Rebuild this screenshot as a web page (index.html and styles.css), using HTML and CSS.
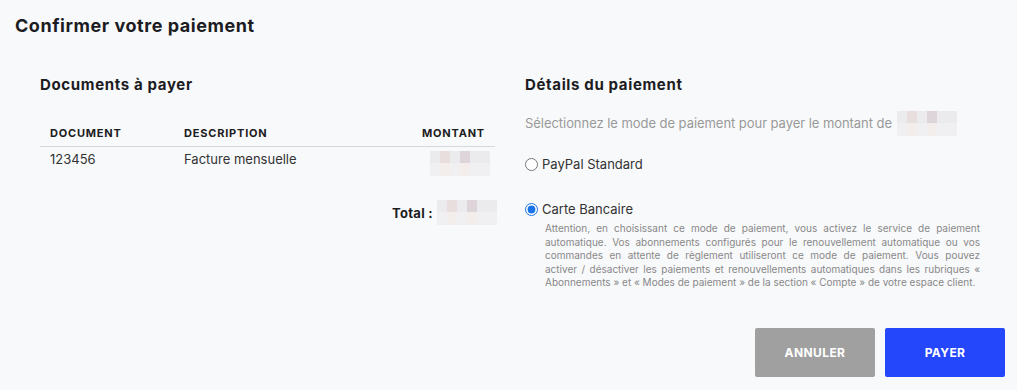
FILE: index.html
```html
<!DOCTYPE html>
<html lang="fr">
<head>
<meta charset="utf-8">
<title>Confirmer votre paiement</title>
<link rel="stylesheet" href="styles.css">
</head>
<body>
<div class="page">
  <h1 class="title">Confirmer votre paiement</h1>
  <div class="columns">
    <section class="col-left">
      <h2 class="section-title">Documents à payer</h2>
      <table class="docs">
        <thead>
          <tr><th class="c-doc">Document</th><th class="c-desc">Description</th><th class="c-amt">Montant</th></tr>
        </thead>
        <tbody>
          <tr><td class="c-doc">123456</td><td class="c-desc">Facture mensuelle</td><td class="c-amt"><span class="blur"><i></i><i class="p"></i><i></i><i class="d"></i><i></i><i></i><i></i><i class="lp"></i><i></i><i class="lp"></i><i></i><i></i></span></td></tr>
        </tbody>
      </table>
      <div class="total">
        <span class="total-label">Total :</span>
        <span class="blur"><i></i><i class="p"></i><i></i><i class="d"></i><i></i><i></i><i></i><i class="lp"></i><i></i><i class="lp"></i><i></i><i></i></span>
      </div>
    </section>
    <section class="col-right">
      <h2 class="section-title">Détails du paiement</h2>
      <p class="intro">Sélectionnez le mode de paiement pour payer le montant de <span class="blur"><i></i><i class="p"></i><i></i><i class="d"></i><i></i><i></i><i></i><i class="lp"></i><i></i><i class="lp"></i><i></i><i></i></span></p>
      <label class="option opt-paypal"><input type="radio" name="mode"> <span>PayPal Standard</span></label>
      <label class="option opt-card"><input type="radio" name="mode" checked> <span>Carte Bancaire</span></label>
      <p class="notice">Attention, en choisissant ce mode de paiement, vous activez le service de paiement automatique. Vos abonnements configurés pour le renouvellement automatique ou vos commandes en attente de règlement utiliseront ce mode de paiement. Vous pouvez <span class="nowrap">activer /</span> désactiver les paiements et renouvellements automatiques dans les rubriques « Abonnements » et « Modes de paiement » de la section « Compte » de votre espace client.</p>
    </section>
  </div>
  <div class="actions">
    <button class="btn btn-cancel">Annuler</button>
    <button class="btn btn-pay">Payer</button>
  </div>
</div>
</body>
</html>
```

FILE: styles.css
```css
* { box-sizing: border-box; }
html, body { margin: 0; padding: 0; }
body {
  background: #f8f9fb;
  font-family: Inter, "Liberation Sans", Arial, sans-serif;
  color: #222;
  width: 1017px;
  height: 390px;
  overflow: hidden;
}
.page { padding: 15px 12px 0 15px; }
.title {
  margin: 0;
  font-size: 18px;
  font-weight: 700;
  line-height: 22px;
  color: #1c1c22;
  letter-spacing: 0.55px;
}
.columns {
  display: grid;
  grid-template-columns: 457px 458px;
  column-gap: 28px;
  padding-left: 25px;
  margin-top: 38px;
}
.section-title {
  margin: 0;
  font-size: 15px;
  font-weight: 700;
  line-height: 20px;
  color: #1c1c22;
  letter-spacing: 0.65px;
}
.docs {
  margin-top: 26px;
  width: 455px;
  border-collapse: collapse;
}
.docs th {
  font-size: 11px;
  font-weight: 700;
  text-transform: uppercase;
  text-align: left;
  color: #1c1c22;
  padding: 5px 0 6px;
  border-bottom: 1px solid #d6d8dc;
  line-height: 14px;
  letter-spacing: 0.8px;
}
.docs td {
  font-size: 13px;
  color: #333;
  padding: 4px 0;
  vertical-align: top;
  line-height: 16px;
}
.docs .c-doc { padding-left: 10px; width: 144px; }
.docs .c-amt { text-align: right; padding-right: 10px; }
.docs td.c-amt { padding-right: 5px; }
.blur {
  display: inline-grid;
  grid-template-columns: repeat(6, 10px);
  grid-template-rows: 12px 13px;
  width: 60px;
  height: 25px;
  vertical-align: middle;
}
.blur i { background: #ebebee; }
.blur i.p { background: #e8dedd; }
.blur i.d { background: #ddd5d9; }
.blur i.lp { background: #f1eced; }
.blur i:nth-child(n+7) { background-color: #f0f0f2; }
.blur i.lp:nth-child(n+7) { background: #f3eeec; }
.total {
  display: flex;
  justify-content: flex-end;
  align-items: center;
  gap: 4px;
  margin-top: 20px;
}
.total-label { font-size: 13px; font-weight: 700; color: #1c1c22; letter-spacing: 0.3px; }
.intro {
  margin: 16px 0 0;
  font-size: 13px;
  color: #999;
  line-height: 25px;
  letter-spacing: -0.05px;
}
.intro .blur { margin-left: 1px; vertical-align: top; }
.option {
  display: flex;
  align-items: center;
  gap: 4px;
  font-size: 13px;
  color: #333;
}
.option input { margin: 0; width: 13px; height: 13px; accent-color: #1a73e8; }
.opt-paypal { margin-top: 20px; }
.opt-card { margin-top: 29px; }
.notice {
  margin: 5px 0 0 20px;
  width: 435px;
  font-size: 10px;
  line-height: 13.5px;
  color: #888;
  text-align: justify;
}
.nowrap { white-space: nowrap; }
.actions {
  display: flex;
  justify-content: flex-end;
  gap: 10px;
  margin-top: 38px;
}
.btn {
  width: 120px;
  height: 49px;
  border: 0;
  border-radius: 2px;
  color: #fff;
  font-family: Inter, "Liberation Sans", Arial, sans-serif;
  font-size: 12px;
  font-weight: 700;
  text-transform: uppercase;
  letter-spacing: 0.4px;
}
.btn-cancel { background: #a0a0a0; }
.btn-pay { background: #2447fb; }
```
